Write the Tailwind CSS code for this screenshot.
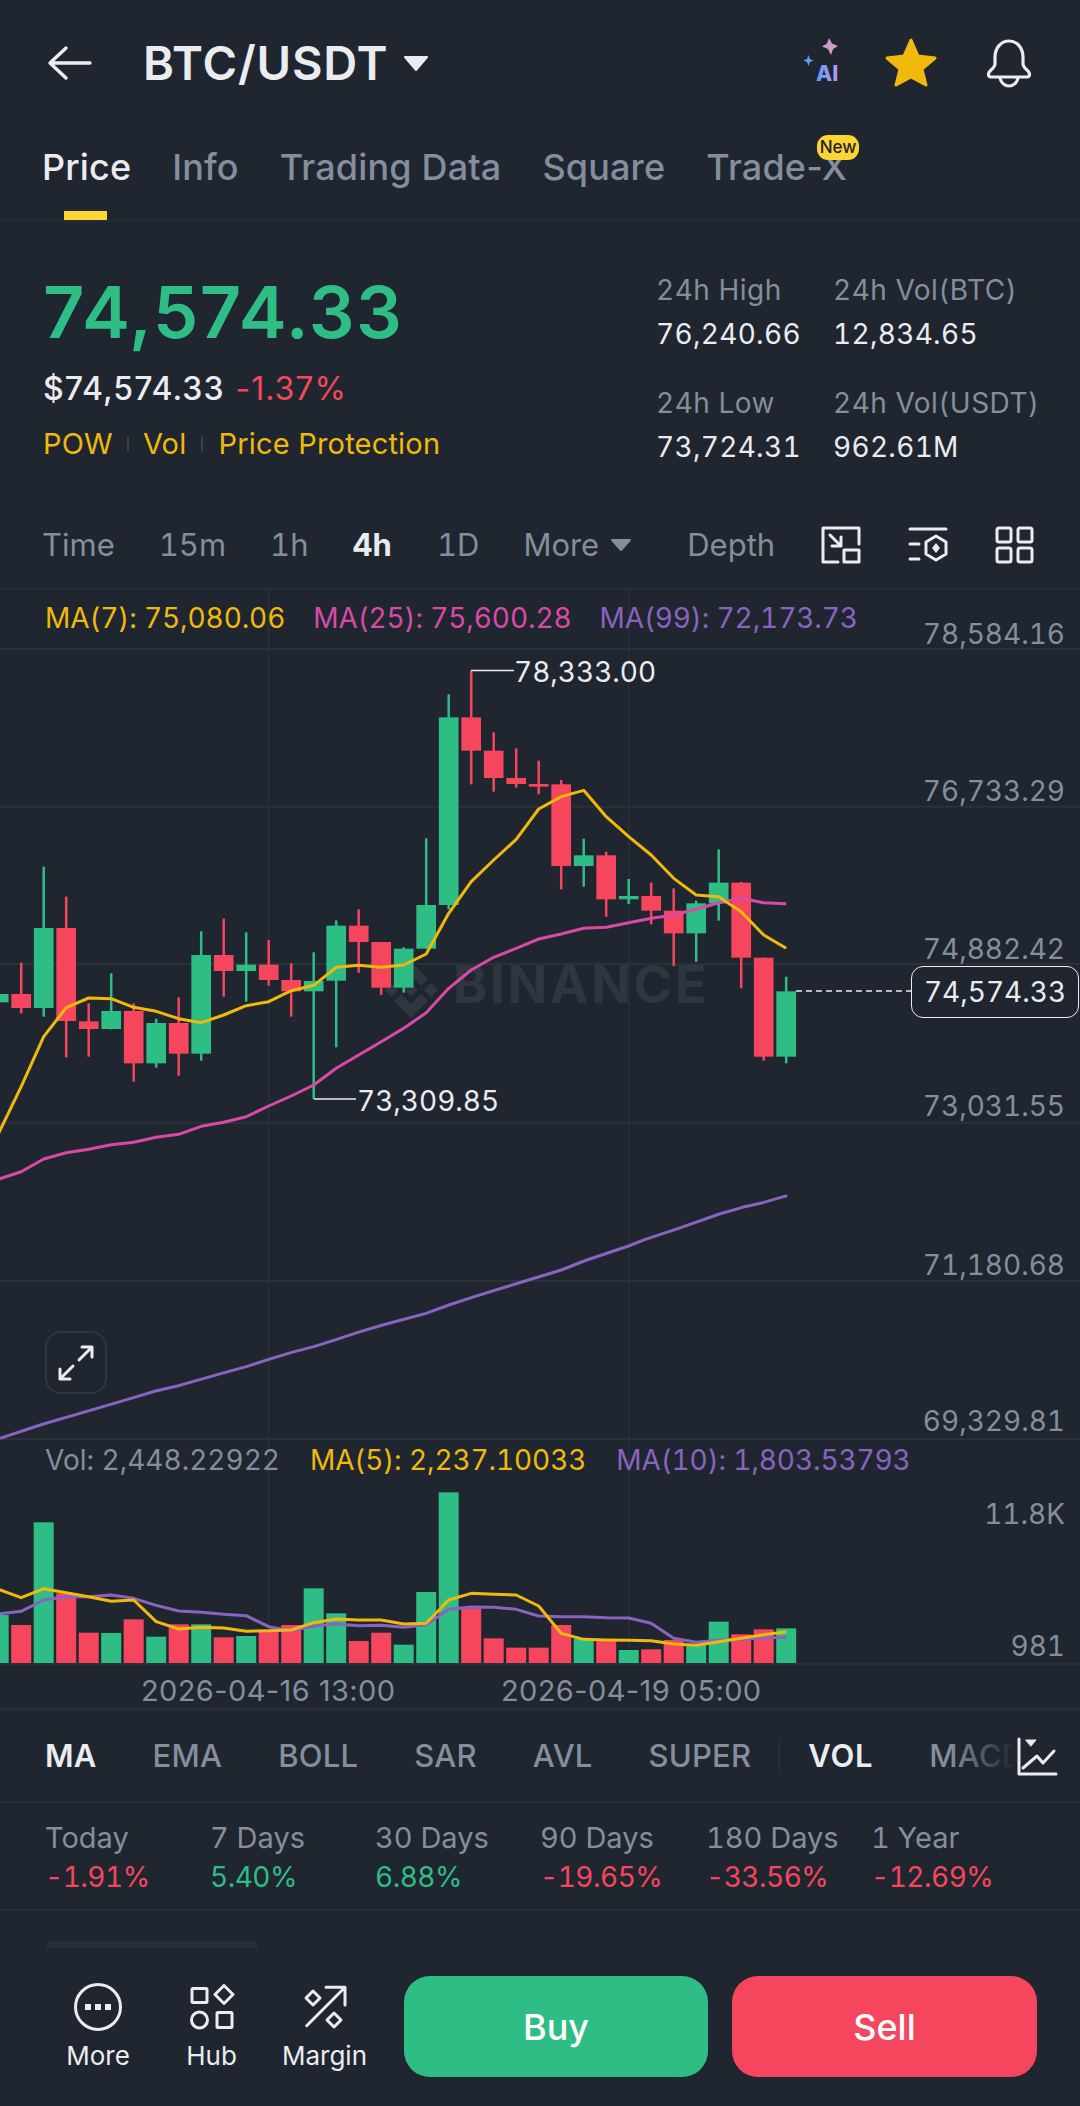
<!DOCTYPE html>
<html lang="en">
<head>
    <meta charset="UTF-8">
    <meta name="viewport" content="width=device-width, initial-scale=1.0">
    <title>BTC/USDT</title>
    <script src="https://cdn.jsdelivr.net/npm/@tailwindcss/browser@4"></script>
</head>
<body class="bg-[#1f2630] font-[Inter,sans-serif] text-[#eaecef]">
<div class="w-[1080px] h-[2106px] overflow-hidden flex flex-col">

    <!-- header -->
    <header class="relative h-[125px] shrink-0 flex items-center">
        <svg class="ml-[47px] w-[46px] h-[36px]" viewBox="0 0 46 36" fill="none" stroke="#eaecef" stroke-width="3.4" stroke-linecap="round" stroke-linejoin="round"><path d="M3 18H43M19 3L3 18L19 33"/></svg>
        <h1 class="ml-[50px] text-[47px] leading-none font-semibold tracking-[0.8px]">BTC/USDT</h1>
        <svg class="ml-[15px] mt-[2px] w-[26px] h-[17px]" viewBox="0 0 26 17" fill="#eaecef" stroke="#eaecef" stroke-width="2" stroke-linejoin="round"><path d="M2 2H24L13 15Z"/></svg>
        <svg class="ml-auto mr-[38px] w-[48px] h-[52px]" viewBox="0 0 48 52">
            <defs>
                <linearGradient id="aiText" x1="0" x2="1" y1="0" y2="0"><stop offset="0" stop-color="#5b9cf6"/><stop offset="1" stop-color="#b99af2"/></linearGradient>
                <linearGradient id="spark" x1="0" x2="1" y1="0" y2="1"><stop offset="0" stop-color="#b58cf5"/><stop offset="1" stop-color="#f2a88e"/></linearGradient>
            </defs>
            <path d="M31 1L34 6.500L40 9L35 12L33 18L30 12L24 9.500L29 6.500Z" fill="url(#spark)"/>
            <path d="M10.500 18L12 22L15.500 23.500L12 25L10.500 29L9 25L5.500 23.500L9 22Z" fill="#5b9cf6"/>
            <text x="18" y="44" font-size="21" font-weight="800" fill="url(#aiText)">AI</text>
        </svg>
        <svg class="mr-[46px] w-[54px] h-[52px]" viewBox="0 0 54 52"><path d="M27 3L34 19L51 21L38 32L42 48L27 40L12 48L16 32L3 21L20 19Z" fill="#f0b90b" stroke="#f0b90b" stroke-width="3" stroke-linejoin="round"/></svg>
        <svg class="mr-[46px] w-[50px] h-[52px]" viewBox="0 0 50 52" fill="none" stroke="#eaecef" stroke-width="3.2" stroke-linecap="round" stroke-linejoin="round"><path d="M25 4C17 4 11 11 11 20V27C11 31 4.500 34 4.500 37C4.500 39 5.500 40 7 40H43C44.500 40 45.500 39 45.500 37C45.500 34 39 31 39 27V20C39 11 33 4 25 4Z"/><path d="M16 41C17 46 21 49 25 49C29 49 33 46 34 41"/></svg>
    </header>

    <!-- tabs -->
    <nav class="relative h-[96px] shrink-0 border-b border-[#2b3139] flex gap-[41px] pl-[42px] pt-[20px] text-[36px] leading-[44px] font-medium tracking-[0.15px] text-[#848e9c]">
        <a class="text-[#eaecef]">Price</a>
        <a>Info</a>
        <a>Trading Data</a>
        <a>Square</a>
        <a>Trade-X</a>
        <span class="absolute left-[817px] top-[10px] w-[42px] h-[25px] rounded-[11px] bg-[#fcd535] text-[#1e2329] text-[17px] leading-[25px] text-center tracking-normal">New</span>
        <span class="absolute left-[64px] bottom-0 w-[43px] h-[9px] bg-[#fcd535]"></span>
    </nav>

    <!-- price + 24h stats -->
    <section class="h-[281px] shrink-0 flex justify-between">
        <div class="pl-[43px] pt-[55px]">
            <div class="text-[72px] leading-none font-semibold tracking-[1.6px] text-[#2ebd85]">74,574.33</div>
            <div class="mt-[23px] flex gap-[11px] text-[32px] leading-[36px] tracking-[1px]">
                <span class="font-medium">$74,574.33</span>
                <span class="text-[#f6465d]">-1.37%</span>
            </div>
            <div class="mt-[22px] flex items-center text-[29px] leading-[30px] tracking-[0.2px] text-[#f0b90b]">
                <span>POW</span>
                <i class="mx-[14px] w-[2px] h-[14px] bg-[#3a414c]"></i>
                <span>Vol</span>
                <i class="mx-[15px] w-[2px] h-[14px] bg-[#3a414c]"></i>
                <span>Price Protection</span>
            </div>
        </div>
        <div class="w-[424px] pt-[51px] grid grid-cols-[177px_auto] content-start text-[28px] leading-[36px] tabular-nums tracking-[0.3px]">
            <div class="tracking-[0.5px] text-[#848e9c]">24h High</div>
            <div class="tracking-[0.5px] text-[#848e9c]">24h Vol(BTC)</div>
            <div class="mt-[8px]">76,240.66</div>
            <div class="mt-[8px]">12,834.65</div>
            <div class="mt-[33px] tracking-[0.5px] text-[#848e9c]">24h Low</div>
            <div class="mt-[33px] tracking-[0.5px] text-[#848e9c]">24h Vol(USDT)</div>
            <div class="mt-[8px]">73,724.31</div>
            <div class="mt-[8px]">962.61M</div>
        </div>
    </section>

    <!-- timeframes -->
    <section class="h-[86px] shrink-0 flex items-center pl-[42px] text-[31px] tabular-nums text-[#848e9c]">
        <span>Time</span>
        <span class="ml-[44px]">15m</span>
        <span class="ml-[44px]">1h</span>
        <span class="ml-[44px] font-bold text-[#eaecef]">4h</span>
        <span class="ml-[45px]">1D</span>
        <span class="ml-[44px]">More</span>
        <svg class="ml-[11px] w-[22px] h-[14px]" viewBox="0 0 22 14" fill="#848e9c" stroke="#848e9c" stroke-width="2" stroke-linejoin="round"><path d="M2 2H20L11 12Z"/></svg>
        <span class="ml-[55px]">Depth</span>
        <div class="ml-auto mr-[46px] flex gap-[47px]">
            <svg class="w-[40px] h-[38px]" viewBox="0 0 40 38" fill="none" stroke="#eaecef" stroke-width="3" stroke-linecap="round" stroke-linejoin="round"><path d="M38 18V2H2V36H17"/><rect x="23" y="24" width="15" height="12"/><path d="M9 9L20 20M20 11V20H11"/></svg>
            <svg class="w-[40px] h-[38px]" viewBox="0 0 40 38" fill="none" stroke="#eaecef" stroke-width="3" stroke-linecap="round" stroke-linejoin="round"><path d="M2 3H38M2 18H11M2 33H11M28 10L38 16V28L28 34L18 28V16Z"/><path d="M28 17L32 22L28 27L24 22Z" fill="#eaecef" stroke="none"/></svg>
            <svg class="w-[39px] h-[38px]" viewBox="0 0 39 38" fill="none" stroke="#eaecef" stroke-width="3" stroke-linejoin="round"><rect x="2" y="2" width="14" height="14" rx="2"/><rect x="23" y="2" width="14" height="14" rx="2"/><rect x="2" y="22" width="14" height="14" rx="2"/><rect x="23" y="22" width="14" height="14" rx="2"/></svg>
        </div>
    </section>

    <!-- chart: the svg uses the page's own y values through its viewBox -->
    <section class="relative h-[1122px] shrink-0 text-[28px] leading-[30px] tabular-nums">
        <svg id="chart" class="absolute inset-0 w-[1080px] h-[1122px]" viewBox="0 588 1080 1122" fill="none"></svg>

        <div class="absolute left-[45px] top-[15px] flex gap-[28px] tracking-[-0.1px]">
            <span class="text-[#f0b90b]">MA(7): 75,080.06</span>
            <span class="text-[#d84aa8]">MA(25): 75,600.28</span>
            <span class="text-[#8a63c0]">MA(99): 72,173.73</span>
        </div>
        <div class="absolute right-[15px] top-[31px] text-[#848e9c]">78,584.16</div>
        <div class="absolute right-[15px] top-[188px] text-[#848e9c]">76,733.29</div>
        <div class="absolute right-[15px] top-[346px] text-[#848e9c]">74,882.42</div>
        <div class="absolute right-[15px] top-[503px] text-[#848e9c]">73,031.55</div>
        <div class="absolute right-[15px] top-[662px] text-[#848e9c]">71,180.68</div>
        <div class="absolute right-[15px] top-[818px] text-[#848e9c]">69,329.81</div>

        <div class="absolute left-[514px] top-[69px]">78,333.00</div>
        <div class="absolute left-[357px] top-[498px]">73,309.85</div>
        <div class="absolute left-[911px] top-[378px] w-[168px] h-[52px] rounded-[12px] border border-[#eaecef] bg-[#1f2630] text-center leading-[50px]">74,574.33</div>

        <div class="absolute left-[45px] top-[743px] w-[62px] h-[63px] rounded-[16px] border-2 border-[#2f3641] flex items-center justify-center">
            <svg class="w-[40px] h-[40px]" viewBox="0 0 40 40" fill="none" stroke="#eaecef" stroke-width="3" stroke-linecap="round" stroke-linejoin="round"><path d="M23 17L36 4M26 4H36V14M17 23L4 36M4 26V36H14"/></svg>
        </div>

        <div class="absolute left-[45px] top-[857px] flex gap-[30px] tracking-[-0.1px]">
            <span class="tracking-normal text-[#848e9c]">Vol: 2,448.22922</span>
            <span class="text-[#f0b90b]">MA(5): 2,237.10033</span>
            <span class="text-[#8a63c0]">MA(10): 1,803.53793</span>
        </div>
        <div class="absolute right-[15px] top-[911px] text-[#848e9c]">11.8K</div>
        <div class="absolute right-[15px] top-[1043px] text-[#848e9c]">981</div>
        <div class="absolute left-[141px] top-[1088px] text-[29px] normal-nums tracking-[0.4px] text-[#848e9c]">2026-04-16 13:00</div>
        <div class="absolute left-[501px] top-[1088px] text-[29px] normal-nums tracking-[0.4px] text-[#848e9c]">2026-04-19 05:00</div>
    </section>

    <!-- indicators -->
    <section class="relative h-[93px] shrink-0 border-b border-[#2b3139] flex items-center gap-[56px] pl-[45px] text-[31px] tracking-[0.2px] font-medium text-[#848e9c] whitespace-nowrap overflow-hidden">
        <span class="font-semibold text-[#eaecef]">MA</span>
        <span>EMA</span>
        <span>BOLL</span>
        <span>SAR</span>
        <span>AVL</span>
        <span>SUPER</span>
        <i class="-mx-[28px] w-px h-[34px] bg-[#2f3641]"></i>
        <span class="font-semibold tracking-[0.8px] text-[#eaecef]">VOL</span>
        <span>MACD</span>
        <div class="absolute right-0 top-0 bottom-0 w-[130px] bg-gradient-to-r from-transparent to-[#1f2630] to-[50%]"></div>
        <svg class="absolute left-[1017px] top-[27px] w-[41px] h-[40px]" viewBox="0 0 41 40" fill="none" stroke="#eaecef" stroke-width="3" stroke-linecap="round" stroke-linejoin="round"><path d="M2 2V37H39M6 31L20 19L26 26L37 14"/><path d="M9 3H19L14 9Z" fill="#eaecef" stroke-width="1"/></svg>
    </section>

    <!-- performance -->
    <section class="h-[107px] shrink-0 border-b border-[#2b3139] pl-[45px] grid grid-cols-[165px_165px_165px_166px_165px_auto] content-start pt-[19px] text-[29px] leading-[32px] tabular-nums text-[#848e9c]">
        <div>Today</div><div>7 Days</div><div>30 Days</div><div>90 Days</div><div>180 Days</div><div>1 Year</div>
        <div class="mt-[7px] text-[28px] tracking-[-0.5px] text-[#f6465d]">-1.91%</div>
        <div class="mt-[7px] text-[28px] tracking-[-0.5px] text-[#2ebd85]">5.40%</div>
        <div class="mt-[7px] text-[28px] tracking-[-0.5px] text-[#2ebd85]">6.88%</div>
        <div class="mt-[7px] text-[28px] tracking-[-0.5px] text-[#f6465d]">-19.65%</div>
        <div class="mt-[7px] text-[28px] tracking-[-0.5px] text-[#f6465d]">-33.56%</div>
        <div class="mt-[7px] text-[28px] tracking-[-0.5px] text-[#f6465d]">-12.69%</div>
    </section>

    <div class="mt-[31px] ml-[46px] w-[212px] h-[7px] rounded-t-[12px] bg-[#282e39] shrink-0"></div>

    <!-- bottom bar -->
    <footer class="flex pl-[41px] pt-[28px] text-[26px] leading-[30px]">
        <div class="w-[114px] flex flex-col items-center">
            <svg class="mt-[7px] w-[48px] h-[48px]" viewBox="0 0 48 48" fill="none" stroke="#eaecef" stroke-width="3"><circle cx="24" cy="24" r="22.500"/><rect x="11" y="21" width="6" height="6" fill="#eaecef" stroke="none"/><rect x="21" y="21" width="6" height="6" fill="#eaecef" stroke="none"/><rect x="31" y="21" width="6" height="6" fill="#eaecef" stroke="none"/></svg>
            <span class="mt-[10px]">More</span>
        </div>
        <div class="w-[113px] flex flex-col items-center">
            <svg class="mt-[8px] w-[50px] h-[46px]" viewBox="0 0 50 46" fill="none" stroke="#eaecef" stroke-width="3" stroke-linejoin="round"><rect x="5" y="4.500" width="15" height="14" rx="1"/><path d="M37 1.500L46 10.500L37 19.500L28 10.500Z"/><circle cx="12.500" cy="36" r="8"/><rect x="30" y="28.500" width="15" height="15" rx="1"/></svg>
            <span class="mt-[11px]">Hub</span>
        </div>
        <div class="w-[113px] flex flex-col items-center">
            <svg class="mt-[8px] w-[48px] h-[46px]" viewBox="0 0 48 46" fill="none" stroke="#eaecef" stroke-width="3" stroke-linecap="round" stroke-linejoin="round"><path d="M5.700 41.700L44 3.300M25 3.300H44V21"/><path d="M12 7L19 14L12 21L5 14Z"/><path d="M33 29L40 36L33 43L26 36Z"/></svg>
            <span class="mt-[11px]">Margin</span>
        </div>
        <button class="ml-[23px] w-[304px] h-[101px] rounded-[26px] bg-[#2ebd85] text-white text-[36px] font-medium">Buy</button>
        <button class="ml-[24px] w-[305px] h-[101px] rounded-[26px] bg-[#f6465d] text-white text-[36px] font-medium">Sell</button>
    </footer>
</div>

<script>
    const GREEN = '#2ebd85', RED = '#f6465d', YELLOW = '#f0b90b', PINK = '#d84aa8', PURPLE = '#8a63c0', GRID = '#2b3139';
    const chart = document.getElementById('chart');
    let out = '';

    const barX = i => 43.7 + i * 22.5;
    const rect = (x, y, w, h, fill) => `<rect x="${x}" y="${y}" width="${w}" height="${h}" fill="${fill}"/>`;
    const polyline = (pts, color, width) =>
        `<polyline points="${pts.map(p => p.join(',')).join(' ')}" stroke="${color}" stroke-width="${width}" stroke-linejoin="round"/>`;

    // candle values were read off a 3x crop, so y = 640 + v / 3
    const py = v => 640 + v / 3;
    // [index, color, wick top, wick bottom, body top, body bottom]
    const candles = [
        [-2,'g',965,1160,1062,1087],[-1,'r',968,1120,1062,1104],[0,'g',680,1130,864,1104],[1,'r',770,1252,864,1143],
        [2,'r',1090,1250,1144,1167],[3,'g',1000,1168,1113,1167],[4,'r',1090,1325,1113,1270],[5,'g',1136,1283,1149,1270],
        [6,'r',1072,1307,1149,1241],[7,'g',874,1262,945,1241],[8,'r',836,1070,945,993],[9,'g',877,1085,974,993],
        [10,'r',900,1037,974,1020],[11,'r',970,1130,1020,1054],[12,'g',937,1377,1023,1054],[13,'g',841,1222,857,1022],
        [14,'r',808,998,857,906],[15,'r',906,1065,906,1043],[16,'g',922,1058,926,1043],[17,'g',595,926,795,926],
        [18,'g',163,808,232,795],[19,'r',92,433,232,332],[20,'r',277,455,332,414],[21,'r',325,443,414,432],
        [22,'r',362,463,432,440],[23,'r',420,748,433,678],[24,'g',596,740,646,678],[25,'r',635,830,646,778],
        [26,'g',717,792,768,778],[27,'r',728,853,768,812],[28,'r',745,978,812,880],[29,'g',782,965,790,880],
        [30,'g',628,842,728,790],[31,'r',726,1045,728,953],[32,'r',953,1262,953,1250],[33,'g',1010,1270,1054,1250]
    ];
    const colorAt = {};
    candles.forEach(c => { colorAt[c[0]] = c[1] === 'g' ? GREEN : RED; });

    // grid
    [649, 806.7, 964, 1123, 1281, 1439, 1664, 1709].forEach(y => { out += rect(0, y - 1, 1080, 2, GRID); });
    out += rect(0, 586.500, 1080, 3, GRID);
    [268.6, 628.8].forEach(x => { out += rect(x - 0.75, 589, 1.5, 1075, GRID); });

    // watermark
    const mark = '#2f3640';
    out += `<g transform="translate(411 990)" fill="${mark}">
        <path d="M0 -28L17 -11L10 -4L0 -14L-10 -4L-17 -11Z"/><path d="M0 28L17 11L10 4L0 14L-10 4L-17 11Z"/>
        <path d="M0 -7L7 0L0 7L-7 0Z"/><path d="M-20 -7L-13 0L-20 7L-27 0Z"/><path d="M20 -7L27 0L20 7L13 0Z"/></g>`;
    out += `<text x="453" y="1003" font-size="52" font-weight="700" letter-spacing="2.7" fill="${mark}">BINANCE</text>`;

    // candles
    candles.forEach(([i, , wt, wb, bt, bb]) => {
        const x = barX(i), color = colorAt[i];
        out += rect(x - 1.25, py(wt), 2.5, py(wb) - py(wt), color);
        out += rect(x - 9.85, py(bt), 19.7, py(bb) - py(bt), color);
    });

    // price moving averages
    const ma7 = [1479,1340,1190,1103,1074,1076,1102,1114,1136,1148,1125,1097,1085,1052,1036,982,976,982,975,942,820,725,660,598,507,470,451,530,590,645,715,765,770,815,885,925];
    const ma25 = [1179,1171.7,1159,1152.7,1149.3,1144.7,1142.3,1137.3,1134.3,1126.3,1122.3,1116.7,1106,1096,1085,1068.3,1055,1041.7,1028.3,1012.7,988.3,970,957.3,948.3,939,934,928.3,927.3,922.7,918.3,915,909.3,902.7,898.3,902.7,903.7];
    const ma99 = [[0,1135],[85,1092],[175,1052],[262,1013],[305,993],[350,977],[440,938],[483,920],[527,898],[570,878],[615,860],[660,838],[700,818],[750,795],[835,760],[880,735],[925,712],[1010,672],[1100,630],[1150,600],[1232,558],[1265,538],[1330,505],[1410,462],[1455,442],[1495,428],[1543,407]];
    out += polyline(ma99.map(([x, y]) => [x / 1.96, 1060 + y / 3]), PURPLE, 3);
    out += polyline(ma25.map((y, n) => [barX(n - 2), y]), PINK, 3);
    out += polyline(ma7.map((v, n) => [barX(n - 2), py(v)]), YELLOW, 3);

    // high / low leaders, last price line
    out += `<path d="M471 670.500H514M314 1099H356" stroke="#eaecef" stroke-width="1.500"/>`;
    out += `<path d="M796 991H911" stroke="#eaecef" stroke-width="1.500" stroke-dasharray="6 4"/>`;

    // volume, read off another 3x crop
    const vy = v => 1420 + v / 3;
    const vols = [585,615,307,520,638,639,598,650,613,613,652,648,632,615,505,580,663,638,674,516,217,565,655,683,683,615,655,660,690,688,660,672,605,643,628,625];
    vols.forEach((v, n) => { out += rect(barX(n - 2) - 10, vy(v), 20, 1663 - vy(v), colorAt[n - 2]); });
    const vol5 = [508,533,506,518,530,544,540,605,627,622,624,634,632,630,608,597,600,600,612,610,540,520,523,525,558,640,658,660,661,662,672,676,665,655,644,635];
    const vol10 = [582,574,540,530,530,525,535,556,573,577,583,587,620,632,618,612,617,616,622,614,568,561,562,568,588,590,590,593,594,610,655,667,661,658,654,652];
    out += polyline(vol10.map((v, n) => [barX(n - 2), vy(v)]), PURPLE, 3);
    out += polyline(vol5.map((v, n) => [barX(n - 2), vy(v)]), YELLOW, 3);

    chart.innerHTML = out;
</script>
</body>
</html>
